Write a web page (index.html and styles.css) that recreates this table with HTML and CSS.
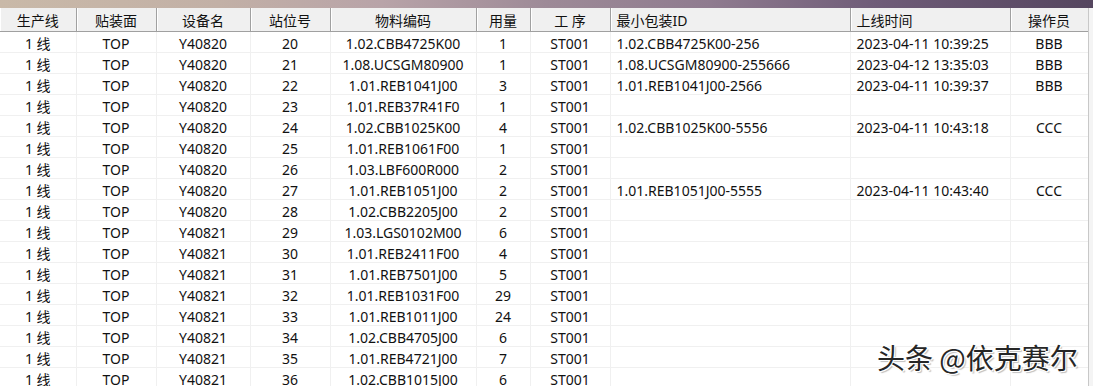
FILE: index.html
```html
<!DOCTYPE html>
<html lang="zh">
<head>
<meta charset="utf-8">
<link rel="stylesheet" href="styles.css">
</head>
<body>
<div class="topstrip"></div>
<div class="frame">
  <div class="gridwrap">
    <table class="grid">
      <colgroup>
        <col class="c1"><col class="c2"><col class="c3"><col class="c4"><col class="c5">
        <col class="c6"><col class="c7"><col class="c8"><col class="c9"><col class="c10">
      </colgroup>
      <thead>
        <tr>
          <th>生产线</th><th>贴装面</th><th>设备名</th><th>站位号</th><th>物料编码</th>
          <th>用量</th><th>工 序</th><th class="left">最小包装ID</th><th class="left">上线时间</th><th>操作员</th>
        </tr>
      </thead>
      <tbody>
        <tr><td>1 线</td><td>TOP</td><td>Y40820</td><td>20</td><td>1.02.CBB4725K00</td><td>1</td><td>ST001</td><td class="left">1.02.CBB4725K00-256</td><td class="left">2023-04-11 10:39:25</td><td>BBB</td></tr>
        <tr><td>1 线</td><td>TOP</td><td>Y40820</td><td>21</td><td>1.08.UCSGM80900</td><td>1</td><td>ST001</td><td class="left">1.08.UCSGM80900-255666</td><td class="left">2023-04-12 13:35:03</td><td>BBB</td></tr>
        <tr><td>1 线</td><td>TOP</td><td>Y40820</td><td>22</td><td>1.01.REB1041J00</td><td>3</td><td>ST001</td><td class="left">1.01.REB1041J00-2566</td><td class="left">2023-04-11 10:39:37</td><td>BBB</td></tr>
        <tr><td>1 线</td><td>TOP</td><td>Y40820</td><td>23</td><td>1.01.REB37R41F0</td><td>1</td><td>ST001</td><td></td><td></td><td></td></tr>
        <tr><td>1 线</td><td>TOP</td><td>Y40820</td><td>24</td><td>1.02.CBB1025K00</td><td>4</td><td>ST001</td><td class="left">1.02.CBB1025K00-5556</td><td class="left">2023-04-11 10:43:18</td><td>CCC</td></tr>
        <tr><td>1 线</td><td>TOP</td><td>Y40820</td><td>25</td><td>1.01.REB1061F00</td><td>1</td><td>ST001</td><td></td><td></td><td></td></tr>
        <tr><td>1 线</td><td>TOP</td><td>Y40820</td><td>26</td><td>1.03.LBF600R000</td><td>2</td><td>ST001</td><td></td><td></td><td></td></tr>
        <tr><td>1 线</td><td>TOP</td><td>Y40820</td><td>27</td><td>1.01.REB1051J00</td><td>2</td><td>ST001</td><td class="left">1.01.REB1051J00-5555</td><td class="left">2023-04-11 10:43:40</td><td>CCC</td></tr>
        <tr><td>1 线</td><td>TOP</td><td>Y40820</td><td>28</td><td>1.02.CBB2205J00</td><td>2</td><td>ST001</td><td></td><td></td><td></td></tr>
        <tr><td>1 线</td><td>TOP</td><td>Y40821</td><td>29</td><td>1.03.LGS0102M00</td><td>6</td><td>ST001</td><td></td><td></td><td></td></tr>
        <tr><td>1 线</td><td>TOP</td><td>Y40821</td><td>30</td><td>1.01.REB2411F00</td><td>4</td><td>ST001</td><td></td><td></td><td></td></tr>
        <tr><td>1 线</td><td>TOP</td><td>Y40821</td><td>31</td><td>1.01.REB7501J00</td><td>5</td><td>ST001</td><td></td><td></td><td></td></tr>
        <tr><td>1 线</td><td>TOP</td><td>Y40821</td><td>32</td><td>1.01.REB1031F00</td><td>29</td><td>ST001</td><td></td><td></td><td></td></tr>
        <tr><td>1 线</td><td>TOP</td><td>Y40821</td><td>33</td><td>1.01.REB1011J00</td><td>24</td><td>ST001</td><td></td><td></td><td></td></tr>
        <tr><td>1 线</td><td>TOP</td><td>Y40821</td><td>34</td><td>1.02.CBB4705J00</td><td>6</td><td>ST001</td><td></td><td></td><td></td></tr>
        <tr><td>1 线</td><td>TOP</td><td>Y40821</td><td>35</td><td>1.01.REB4721J00</td><td>7</td><td>ST001</td><td></td><td></td><td></td></tr>
        <tr><td>1 线</td><td>TOP</td><td>Y40821</td><td>36</td><td>1.02.CBB1015J00</td><td>6</td><td>ST001</td><td></td><td></td><td></td></tr>
      </tbody>
    </table>
  </div>
  <div class="scrollbar"></div>
</div>
<div class="watermark">头条 @依克赛尔</div>
</body>
</html>
```

FILE: styles.css
```css
html, body {
  margin: 0;
  padding: 0;
  background: #ffffff;
  overflow: hidden;
  width: 1093px;
  height: 386px;
}

body {
  position: relative;
  font-family: "Noto Sans", "Noto Sans CJK SC", sans-serif;
  font-size: 14px;
  color: #111111;
}

.topstrip {
  height: 8px;
  background: linear-gradient(90deg, #c9b9a8 0%, #c2b0a6 20%, #b8a3a8 35%, #9d8a97 50%, #8f7b8f 65%, #6f5c78 80%, #55465f 100%);
}

.frame {
  display: flex;
  align-items: stretch;
}

.gridwrap {
  width: 1088px;
  overflow: hidden;
}

.grid {
  border-collapse: collapse;
  table-layout: fixed;
  width: 1088px;
}

.c1 { width: 76px; }
.c2 { width: 80px; }
.c3 { width: 94px; }
.c4 { width: 80px; }
.c5 { width: 146px; }
.c6 { width: 54px; }
.c7 { width: 80px; }
.c8 { width: 240px; }
.c9 { width: 160px; }
.c10 { width: 78px; }

.grid th {
  height: 21px;
  padding: 2px 0 0 0;
  background: #f0f0f0;
  font-weight: normal;
  font-size: 14px;
  color: #111111;
  text-align: center;
  border-right: 1px solid #a0a0a0;
  border-bottom: 1px solid #a0a0a0;
  box-shadow: inset 1px 0 0 #ffffff;
  white-space: nowrap;
  line-height: 20px;
}

.grid td {
  height: 17px;
  padding: 3px 0 0 0;
  text-align: center;
  border-right: 1px solid #f0f0f0;
  border-bottom: 1px solid #f0f0f0;
  white-space: nowrap;
  line-height: 17px;
}

.grid .left {
  text-align: left;
  padding-left: 6px;
}

.scrollbar {
  width: 4px;
  border-left: 1px solid #c8c8c8;
  background: #f4f4f4;
}

.watermark {
  position: absolute;
  left: 877px;
  top: 337px;
  font-family: "Noto Sans CJK SC", "Noto Sans", sans-serif;
  font-size: 28px;
  line-height: 40px;
  color: #262626;
  text-shadow: 1px 1px 0 #ffffff, -1px -1px 0 #ffffff, 1px -1px 0 #ffffff, -1px 1px 0 #ffffff, 2px 2px 1px rgba(0,0,0,0.25);
  white-space: nowrap;
}
```
